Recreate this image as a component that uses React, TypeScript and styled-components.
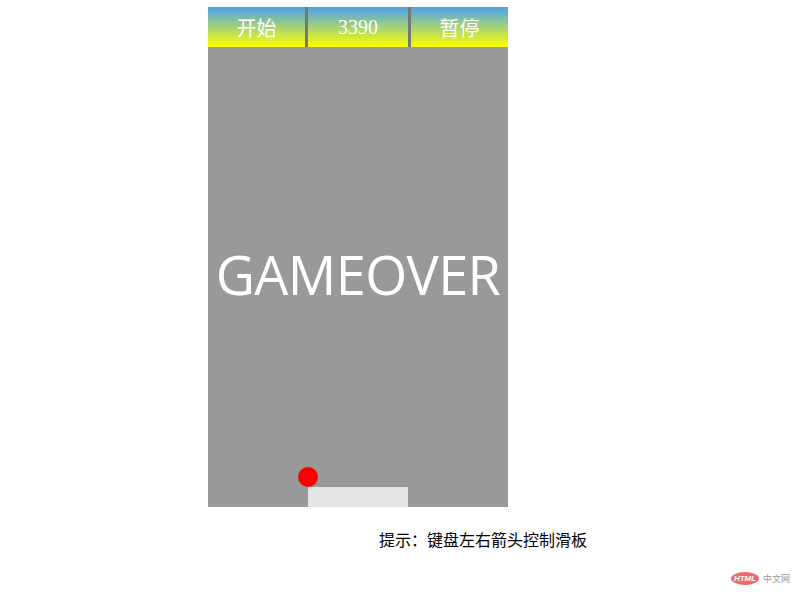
import React from 'react';
import styled, { createGlobalStyle } from 'styled-components';

const GlobalStyle = createGlobalStyle`
  html, body {
    margin: 0;
    padding: 0;
    background: #ffffff;
  }
  body {
    font-family: "Liberation Serif", "Noto Sans CJK SC", serif;
  }
`;

const Page = styled.div`
  position: relative;
  width: 802px;
  height: 602px;
  padding: 7px 0 0 208px;
  box-sizing: border-box;
`;

const Game = styled.div`
  width: 300px;
  height: 500px;
  display: flex;
  flex-direction: column;
  background: #999999;
`;

const Toolbar = styled.div`
  display: flex;
  height: 40px;
  flex: none;
`;

const Cell = styled.div<{ $w: number }>`
  width: ${(p) => p.$w}px;
  height: 40px;
  display: flex;
  align-items: center;
  justify-content: center;
  background: linear-gradient(to bottom, #4aa3ec, #ffff00);
  color: #ffffff;
  font-family: "Liberation Serif", "Noto Sans CJK SC", serif;
  font-size: 20px;
`;

const Divider = styled.div`
  width: 3px;
  background: #777777;
`;

const Field = styled.div`
  position: relative;
  flex: 1;
  display: flex;
  align-items: center;
  justify-content: center;
`;

const Message = styled.div`
  color: #ffffff;
  font-family: "Open Sans", "Noto Sans", sans-serif;
  font-size: 54px;
  margin-top: -6px;
  letter-spacing: -0.6px;
`;

const Ball = styled.div`
  position: absolute;
  left: 90px;
  top: 420px;
  width: 20px;
  height: 20px;
  border-radius: 50%;
  background: #ff0000;
`;

const Paddle = styled.div`
  position: absolute;
  left: 100px;
  bottom: 0;
  width: 100px;
  height: 20px;
  background: #e5e5e5;
`;

const Tip = styled.p`
  margin: 21px 0 0 171px;
  font-family: "Noto Sans CJK SC", sans-serif;
  font-size: 16px;
  line-height: 22px;
  color: #000000;
`;

const Watermark = styled.div`
  position: absolute;
  right: 12px;
  bottom: 17px;
  display: flex;
  align-items: center;
  gap: 4px;
`;

const Badge = styled.span`
  display: inline-flex;
  align-items: center;
  justify-content: center;
  width: 28px;
  height: 13px;
  border-radius: 50%;
  background: #ee6b6b;
  color: #ffffff;
  font-family: "Liberation Sans", sans-serif;
  font-style: italic;
  font-weight: bold;
  font-size: 8px;
`;

const Site = styled.span`
  font-family: "Noto Sans CJK SC", sans-serif;
  font-size: 9px;
  color: #999999;
`;

export default function App() {
  return (
    <>
      <GlobalStyle />
      <Page>
        <Game>
          <Toolbar>
            <Cell $w={97}>开始</Cell>
            <Divider />
            <Cell $w={100}>3390</Cell>
            <Divider />
            <Cell $w={97}>暂停</Cell>
          </Toolbar>
          <Field>
            <Message>GAMEOVER</Message>
            <Ball />
            <Paddle />
          </Field>
        </Game>
        <Tip>提示：键盘左右箭头控制滑板</Tip>
        <Watermark>
          <Badge>HTML</Badge>
          <Site>中文网</Site>
        </Watermark>
      </Page>
    </>
  );
}
